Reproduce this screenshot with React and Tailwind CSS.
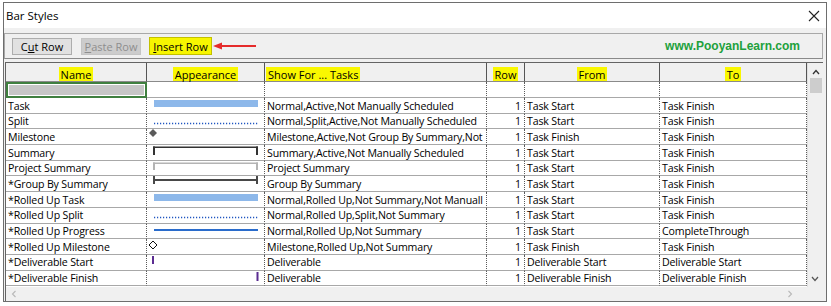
import React from "react";

const rows = [
  ["Task", "task", "Normal,Active,Not Manually Scheduled", "Task Start", "Task Finish"],
  ["Split", "split", "Normal,Split,Active,Not Manually Scheduled", "Task Start", "Task Finish"],
  ["Milestone", "milestone", "Milestone,Active,Not Group By Summary,Not", "Task Finish", "Task Finish"],
  ["Summary", "summary", "Summary,Active,Not Manually Scheduled", "Task Start", "Task Finish"],
  ["Project Summary", "project", "Project Summary", "Task Start", "Task Finish"],
  ["*Group By Summary", "group", "Group By Summary", "Task Start", "Task Finish"],
  ["*Rolled Up Task", "rtask", "Normal,Rolled Up,Not Summary,Not Manuall", "Task Start", "Task Finish"],
  ["*Rolled Up Split", "rsplit", "Normal,Rolled Up,Split,Not Summary", "Task Start", "Task Finish"],
  ["*Rolled Up Progress", "rprogress", "Normal,Rolled Up,Not Summary", "Task Start", "CompleteThrough"],
  ["*Rolled Up Milestone", "rmilestone", "Milestone,Rolled Up,Not Summary", "Task Finish", "Task Finish"],
  ["*Deliverable Start", "dstart", "Deliverable", "Deliverable Start", "Deliverable Start"],
  ["*Deliverable Finish", "dfinish", "Deliverable", "Deliverable Finish", "Deliverable Finish"],
];

function Appearance({ type }) {
  return (
    <svg width="117" height="15" viewBox="0 0 117 15" className="block">
      {(type === "task" || type === "rtask") && (
        <rect x="7" y="2" width="104" height="7" fill="#8db8ea" />
      )}
      {(type === "split" || type === "rsplit") && (
        <line x1="7" y1="9.5" x2="111" y2="9.5" stroke="#1f55c0" strokeWidth="1.3" strokeDasharray="1.2 1.8" />
      )}
      {type === "milestone" && (
        <polygon points="6,0 10,4 6,8 2,4" fill="#5a5a5a" />
      )}
      {type === "rmilestone" && (
        <polygon points="6,2 10,6 6,10 2,6" fill="#fff" stroke="#111" strokeWidth="1" />
      )}
      {type === "summary" && (
        <g fill="#333">
          <rect x="6" y="1.5" width="105" height="1.5" />
          <rect x="6" y="1.5" width="2" height="8.5" />
          <rect x="109" y="1.5" width="2" height="8.5" />
        </g>
      )}
      {type === "project" && (
        <g fill="#b4b4b4">
          <rect x="6" y="1.5" width="105" height="1.5" />
          <rect x="6" y="1.5" width="2" height="7.5" />
          <rect x="109" y="1.5" width="2" height="7.5" />
        </g>
      )}
      {type === "group" && (
        <g fill="#484848">
          <rect x="6" y="3" width="105" height="2" />
          <rect x="6" y="0" width="2" height="8" />
          <rect x="109" y="0" width="2" height="8" />
        </g>
      )}
      {type === "rprogress" && (
        <rect x="7" y="5" width="104" height="2" fill="#2a6ccc" />
      )}
      {type === "dstart" && <rect x="5" y="1" width="2" height="8" fill="#5b2c91" />}
      {type === "dfinish" && <rect x="109.5" y="1" width="2" height="9" fill="#5b2c91" />}
    </svg>
  );
}

const cellBase =
  "h-full border-b border-b-[#a8a8a8] border-r border-r-[#5a5a5a] [border-right-style:dotted] overflow-hidden whitespace-nowrap flex items-center";

function Btn({ children, className }) {
  return (
    <div className={"h-[17px] flex items-center justify-center border text-[11px] leading-none " + className}>
      {children}
    </div>
  );
}

export default function App() {
  return (
    <div className="w-[831px] h-[306px] bg-white overflow-hidden" style={{ fontFamily: "'Open Sans', 'Noto Sans', sans-serif" }}>
      <div className="ml-[3px] mt-[2px] w-[824px] h-[300px] border border-[#6e6e6e] bg-[#f0f0f0] flex flex-col">
        {/* title bar */}
        <div className="h-[25px] bg-white flex items-center pl-[2px] pr-[4px] shrink-0">
          <span className="text-[11.5px] text-black">Bar Styles</span>
          <div className="flex-1" />
          <svg width="12" height="12" viewBox="0 0 12 12" className="mr-[2px]">
            <path d="M1 1 L11 11 M11 1 L1 11" stroke="#222" strokeWidth="1.1" />
          </svg>
        </div>
        {/* toolbar */}
        <div className="mt-[5px] mr-[3px] h-[26px] border border-[#a8a8a8] border-b-[#8a8a8a] flex items-center shrink-0">
          <Btn className="ml-[7px] w-[60px] bg-[#e1e1e1] border-[#adadad] text-black">
            <span>C<span className="underline">u</span>t Row</span>
          </Btn>
          <Btn className="ml-[9px] w-[60px] bg-[#cccccc] border-[#c4c4c4] text-[#8e8e8e]">
            <span><span className="underline">P</span>aste Row</span>
          </Btn>
          <Btn className="ml-[8px] w-[63px] h-[18px] bg-[#f7f500] border-[#c2c000] text-black">
            <span><span className="underline">I</span>nsert Row</span>
          </Btn>
          <svg width="44" height="10" viewBox="0 0 44 10" className="ml-[1px]">
            <polygon points="0,5 9,1.5 9,8.5" fill="#e52b2b" />
            <rect x="8" y="4" width="35" height="2" fill="#e52b2b" />
          </svg>
          <div className="flex-1" />
          <span
            className="mr-[22px] text-[12px] font-bold text-[#21a03c]"
            style={{ fontFamily: "'Liberation Sans', Arial, sans-serif" }}
          >
            www.PooyanLearn.com
          </span>
        </div>
        {/* grid */}
        <div className="mt-[3px] ml-[1px] w-[818px] flex-1 flex flex-col border-l border-t border-[#646464] min-h-0">
          <div className="flex flex-1 min-h-0">
            <div className="w-[801px] flex flex-col">
              {/* header */}
              <div className="grid grid-cols-[141px_118px_222px_38px_135px_147px] h-[19px] shrink-0 text-[11px] text-black">
                {["Name", "Appearance", "Show For ... Tasks", "Row", "From", "To"].map((h, i) => (
                  <div
                    key={h}
                    className={
                      "h-full border-b border-[#8a8a8a] border-r border-r-[#555] bg-[#f0f0f0] flex items-end " +
                      (i === 2 ? "justify-start pl-[1px]" : "justify-center")
                    }
                  >
                    <span className="bg-[#f9f700] px-[2px] h-[14px] leading-[15px]">{h}</span>
                  </div>
                ))}
              </div>
              {/* selected empty row */}
              <div className="grid grid-cols-[141px_118px_222px_38px_135px_147px] h-[16px] shrink-0">
                <div className="h-full border-[2px] border-[#3f7f3f] p-[1px] bg-white">
                  <div className="h-full bg-[#c6c6c6]" />
                </div>
                <div className={cellBase + " bg-white"} />
                <div className={cellBase + " bg-white"} />
                <div className={cellBase + " bg-white"} />
                <div className={cellBase + " bg-white"} />
                <div className={cellBase + " bg-white"} />
              </div>
              {rows.map((r) => (
                <div
                  key={r[0]}
                  className="grid grid-cols-[141px_118px_222px_38px_135px_147px] h-[15.7px] shrink-0 bg-white text-[10.6px] tracking-[-0.15px] text-black leading-none"
                >
                  <div className={cellBase + " pl-[2px] pt-[1px]"}>{r[0]}</div>
                  <div className={cellBase + " items-start"}>
                    <Appearance type={r[1]} />
                  </div>
                  <div className={cellBase + " pl-[2px] pt-[1px]"}>{r[2]}</div>
                  <div className={cellBase + " justify-end pr-[3px] pt-[1px]"}>1</div>
                  <div className={cellBase + " pl-[2px] pt-[1px]"}>{r[3]}</div>
                  <div className={cellBase + " pl-[2px] pt-[1px]"}>{r[4]}</div>
                </div>
              ))}
              <div className="flex-1 bg-white" />
            </div>
            {/* vertical scrollbar */}
            <div className="w-[16px] bg-[#f0f0f0] flex flex-col items-center border-l border-[#e0e0e0]">
              <svg width="8" height="6" viewBox="0 0 8 6" className="mt-[6px]">
                <path d="M1 5 L4 1.5 L7 5" stroke="#333" strokeWidth="1.3" fill="none" />
              </svg>
              <div className="mt-[3px] w-[12px] h-[15px] bg-[#cdcdcd]" />
              <div className="flex-1" />
              <svg width="8" height="6" viewBox="0 0 8 6" className="mb-[5px] -ml-[2px]">
                <path d="M1 1 L4 4.5 L7 1" stroke="#555" strokeWidth="1.2" fill="none" />
              </svg>
            </div>
          </div>
          {/* horizontal scrollbar */}
          <div className="h-[14px] bg-[#f0f0f0] flex items-center shrink-0">
            <svg width="6" height="8" viewBox="0 0 6 8" className="ml-[5px]">
              <path d="M4.5 1 L1.5 4 L4.5 7" stroke="#b8b8b8" strokeWidth="1.1" fill="none" />
            </svg>
            <div className="flex-1" />
            <svg width="6" height="8" viewBox="0 0 6 8" className="mr-[30px]">
              <path d="M1.5 1 L4.5 4 L1.5 7" stroke="#b8b8b8" strokeWidth="1.1" fill="none" />
            </svg>
          </div>
        </div>
      </div>
    </div>
  );
}
